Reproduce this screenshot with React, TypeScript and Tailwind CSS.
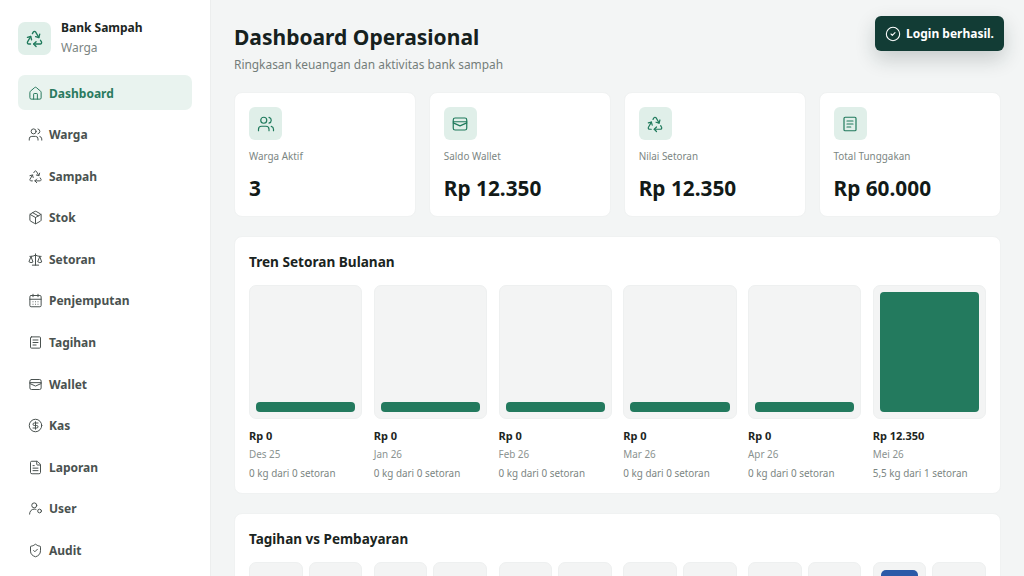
import { CalendarDays, CircleCheck, CircleDollarSign, FileText, House, Package, Recycle, Scale, ShieldCheck, Users } from 'lucide-react'
import type { ComponentType } from 'react'

type IconProps = { className?: string; strokeWidth?: number }

function WalletIcon({ className, strokeWidth = 2 }: IconProps) {
  return (
    <svg viewBox="0 0 24 24" fill="none" stroke="currentColor" strokeWidth={strokeWidth} strokeLinecap="round" strokeLinejoin="round" className={className}>
      <rect x="3" y="4" width="18" height="16" rx="2.500" />
      <path d="M3 9h18" />
      <path d="M3 10.500l9 4 9-4" />
    </svg>
  )
}

function BillIcon({ className, strokeWidth = 2 }: IconProps) {
  return (
    <svg viewBox="0 0 24 24" fill="none" stroke="currentColor" strokeWidth={strokeWidth} strokeLinecap="round" strokeLinejoin="round" className={className}>
      <rect x="4" y="3" width="16" height="18" rx="1.500" />
      <path d="M8 8h8" />
      <path d="M8 12h8" />
      <path d="M8 16h5" />
    </svg>
  )
}

function UserKeyIcon({ className, strokeWidth = 2 }: IconProps) {
  return (
    <svg viewBox="0 0 24 24" fill="none" stroke="currentColor" strokeWidth={strokeWidth} strokeLinecap="round" strokeLinejoin="round" className={className}>
      <circle cx="10" cy="7" r="4" />
      <path d="M2.500 21c0-4.500 3-8 7.500-8 1 0 2 .2 2.800.5" />
      <circle cx="18.500" cy="16" r="3" />
    </svg>
  )
}

const navItems: { label: string; icon: ComponentType<IconProps>; active?: boolean }[] = [
  { label: 'Dashboard', icon: House, active: true },
  { label: 'Warga', icon: Users },
  { label: 'Sampah', icon: Recycle },
  { label: 'Stok', icon: Package },
  { label: 'Setoran', icon: Scale },
  { label: 'Penjemputan', icon: CalendarDays },
  { label: 'Tagihan', icon: BillIcon },
  { label: 'Wallet', icon: WalletIcon },
  { label: 'Kas', icon: CircleDollarSign },
  { label: 'Laporan', icon: FileText },
  { label: 'User', icon: UserKeyIcon },
  { label: 'Audit', icon: ShieldCheck },
]

const stats: { label: string; value: string; icon: ComponentType<IconProps> }[] = [
  { label: 'Warga Aktif', value: '3', icon: Users },
  { label: 'Saldo Wallet', value: 'Rp 12.350', icon: WalletIcon },
  { label: 'Nilai Setoran', value: 'Rp 12.350', icon: Recycle },
  { label: 'Total Tunggakan', value: 'Rp 60.000', icon: BillIcon },
]

const months = [
  { total: 'Rp 0', month: 'Des 25', note: '0 kg dari 0 setoran', full: false },
  { total: 'Rp 0', month: 'Jan 26', note: '0 kg dari 0 setoran', full: false },
  { total: 'Rp 0', month: 'Feb 26', note: '0 kg dari 0 setoran', full: false },
  { total: 'Rp 0', month: 'Mar 26', note: '0 kg dari 0 setoran', full: false },
  { total: 'Rp 0', month: 'Apr 26', note: '0 kg dari 0 setoran', full: false },
  { total: 'Rp 12.350', month: 'Mei 26', note: '5,5 kg dari 1 setoran', full: true },
]

export default function App() {
  return (
    <div className="relative flex h-[576px] w-[1024px] overflow-hidden bg-[#f3f5f5] font-['Noto_Sans',sans-serif] text-[#14201c]">
      <aside className="w-[211px] shrink-0 border-r border-[#eceeee] bg-white pl-[18px] pr-[18px] pt-[20px]">
        <div className="flex items-center gap-[10px]">
          <div className="flex h-[33px] w-[33px] items-center justify-center rounded-[7px] bg-[#e0efe9] text-[#1f7a5c]">
            <Recycle className="h-[19px] w-[19px]" strokeWidth={1.7} />
          </div>
          <div className="-mt-[2px]">
            <div className="text-[12px] font-bold leading-[20px] text-[#1c2623]">Bank Sampah</div>
            <div className="text-[12px] leading-[19px] text-[#7b8582]">Warga</div>
          </div>
        </div>
        <nav className="mt-[18px] flex flex-col gap-[6.600px]">
          {navItems.map((item) => (
            <div
              key={item.label}
              className={`flex h-[35px] w-[174px] items-center gap-[6px] rounded-[7px] px-[10px] pt-[2px] text-[12px] font-bold ${item.active ? 'bg-[#e9f3ef] text-[#2a7a5f]' : 'text-[#4a5250]'}`}
            >
              <item.icon className="-mt-[1px] h-[15px] w-[15px] shrink-0" strokeWidth={1.6} />
              {item.label}
            </div>
          ))}
        </nav>
      </aside>

      <main className="min-w-0 flex-1 pl-[23px] pr-[23px] pt-[22px]">
        <h1 className="text-[21px] font-bold leading-[31px] text-[#16211e]">Dashboard Operasional</h1>
        <p className="mt-[2px] text-[11.900px] leading-[19px] text-[#737d7a]">Ringkasan keuangan dan aktivitas bank sampah</p>

        <section className="mt-[18px] grid grid-cols-4 gap-[12.400px]">
          {stats.map((stat) => (
            <div key={stat.label} className="h-[125px] rounded-[8px] border border-[#f0f2f2] bg-white px-[14px] pt-[14px]">
              <div className="flex h-[33px] w-[33px] items-center justify-center rounded-[6px] bg-[#e0efe9] text-[#1f7a5c]">
                <stat.icon className="h-[18px] w-[18px]" strokeWidth={1.6} />
              </div>
              <div className="mt-[9px] text-[9.900px] leading-[15px] text-[#7b8582]">{stat.label}</div>
              <div className="mt-[10px] text-[20.800px] font-bold leading-[28px] text-[#121a18]">{stat.value}</div>
            </div>
          ))}
        </section>

        <section className="mt-[19px] h-[258px] rounded-[8px] border border-[#f0f2f2] bg-white px-[14px] pt-[15px]">
          <h2 className="text-[13.600px] font-bold leading-[20px] text-[#1a2421]">Tren Setoran Bulanan</h2>
          <div className="mt-[13px] grid grid-cols-6 gap-[11.500px]">
            {months.map((m) => (
              <div key={m.month}>
                <div className="flex h-[134px] items-end rounded-[7px] border border-[#eef0f0] bg-[#f3f4f4] p-[6px]">
                  <div className={`w-full rounded-[4px] bg-[#237a5e] ${m.full ? 'h-[120px]' : 'h-[10px]'}`} />
                </div>
                <div className="mt-[9px] text-[11px] font-bold leading-[16px] text-[#1c2522]">{m.total}</div>
                <div className="mt-[3px] text-[9.900px] leading-[15px] text-[#8a9290]">{m.month}</div>
                <div className="mt-[4px] text-[9.900px] leading-[15px] text-[#7b8582]">{m.note}</div>
              </div>
            ))}
          </div>
        </section>

        <section className="mt-[19px] rounded-[8px] border border-[#f0f2f2] bg-white px-[14px] pb-[20px] pt-[15px]">
          <h2 className="text-[13.500px] font-bold leading-[20px] text-[#1a2421]">Tagihan vs Pembayaran</h2>
          <div className="mt-[13px] grid grid-cols-6 gap-[11.500px]">
            {months.map((m) => (
              <div key={m.month} className="grid grid-cols-2 gap-[6px]">
                <div className="flex h-[134px] items-start rounded-[7px] border border-[#eef0f0] bg-[#f3f4f4] p-[7px]">
                  {m.full && <div className="h-[120px] w-full rounded-[5px] bg-[#2b5aa8]" />}
                </div>
                <div className="h-[134px] rounded-[7px] border border-[#eef0f0] bg-[#f3f4f4]" />
              </div>
            ))}
          </div>
        </section>
      </main>

      <div className="absolute right-[20px] top-[16px] flex h-[35px] items-center gap-[5px] rounded-[6px] bg-[#123c35] pl-[10px] pr-[10px] text-[12px] font-bold text-white shadow-[0_8px_20px_rgba(20,40,40,0.2)]">
        <CircleCheck className="h-[16px] w-[16px]" strokeWidth={1.6} />
        Login berhasil.
      </div>
    </div>
  )
}
